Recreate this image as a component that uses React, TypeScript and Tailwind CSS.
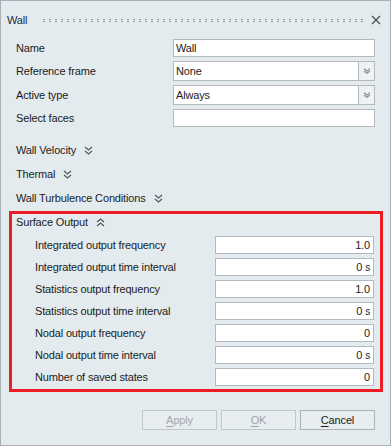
import React from 'react';

const font = { fontFamily: '"Liberation Sans", Arial, sans-serif' };

const outputRows = [
  { label: 'Integrated output frequency', value: '1.0', unit: '' },
  { label: 'Integrated output time interval', value: '0', unit: 's' },
  { label: 'Statistics output frequency', value: '1.0', unit: '' },
  { label: 'Statistics output time interval', value: '0', unit: 's' },
  { label: 'Nodal output frequency', value: '0', unit: '' },
  { label: 'Nodal output time interval', value: '0', unit: 's' },
  { label: 'Number of saved states', value: '0', unit: '' },
];

function DoubleChevron({ up = false }: { up?: boolean }) {
  return (
    <svg width="9" height="9" viewBox="0 0 9 9" className="shrink-0">
      <g
        fill="none"
        stroke="#555b60"
        strokeWidth="1.3"
        transform={up ? 'rotate(180 4.5 4.5)' : undefined}
      >
        <polyline points="1,1 4.5,4 8,1" />
        <polyline points="1,5 4.5,8 8,5" />
      </g>
    </svg>
  );
}

function ComboArrow() {
  return (
    <svg width="8" height="6" viewBox="0 0 8 6">
      <g fill="none" stroke="#8a9095" strokeWidth="1.2">
        <polyline points="1,0.8 4,3 7,0.8" />
        <polyline points="1,3 4,5.2 7,3" />
      </g>
    </svg>
  );
}

function Combo({ value }: { value: string }) {
  return (
    <div className="flex h-[20px]">
      <div className="flex-1 flex items-center bg-white border border-[#b3b9bd] pl-[2px]">
        {value}
      </div>
      <div className="w-[16px] flex items-center justify-center border border-l-0 border-[#b3b9bd] bg-[#eef2f4]">
        <ComboArrow />
      </div>
    </div>
  );
}

function Section({ title }: { title: string }) {
  return (
    <div className="h-[24px] flex items-center gap-[8px]">
      <span>{title}</span>
      <DoubleChevron />
    </div>
  );
}

export default function App() {
  return (
    <div
      style={font}
      className="w-[391px] h-[446px] border border-[#a9b0b5] bg-[#e4ebef] text-[11px] tracking-[-0.15px] text-[#1b1b1b] flex flex-col select-none"
    >
      {/* title bar */}
      <div className="h-[38px] flex items-center pl-[6px] pr-[9px]">
        <span className="text-[#1e2a3c]">Wall</span>
        <svg className="ml-[16px] flex-1 h-[3px]" height="3">
          <defs>
            <pattern id="grip" width="6" height="3" patternUnits="userSpaceOnUse">
              <rect x="0" y="0" width="2" height="1" fill="#8f979c" />
              <rect x="0" y="2" width="2" height="1" fill="#8f979c" />
            </pattern>
          </defs>
          <rect width="100%" height="3" fill="url(#grip)" />
        </svg>
        <svg width="10" height="10" viewBox="0 0 10 10" className="ml-[7px]">
          <g stroke="#4f5458" strokeWidth="1.2">
            <line x1="1" y1="1" x2="9" y2="9" />
            <line x1="9" y1="1" x2="1" y2="9" />
          </g>
        </svg>
      </div>

      {/* main fields */}
      <div className="grid grid-cols-[157px_1fr] gap-y-[4px] pl-[15px] pr-[15px]">
        <div className="flex items-center h-[18px]">Name</div>
        <div className="h-[18px] flex items-center bg-white border border-[#b3b9bd] pl-[2px]">Wall</div>
        <div className="flex items-center">Reference frame</div>
        <Combo value="None" />
        <div className="flex items-center">Active type</div>
        <Combo value="Always" />
        <div className="flex items-center h-[18px]">Select faces</div>
        <div className="h-[18px] bg-white border border-[#b3b9bd]" />
      </div>

      {/* collapsed sections */}
      <div className="mt-[11px] pl-[15px]">
        <Section title="Wall Velocity" />
        <Section title="Thermal" />
        <Section title="Wall Turbulence Conditions" />
      </div>

      {/* surface output */}
      <div className="mt-[1px] ml-[8px] mr-[7px] border-[3px] border-[#ee1c25] pb-[3px]">
        <div className="h-[17px] flex items-center gap-[8px] pl-[4px]">
          <span>Surface Output</span>
          <DoubleChevron up />
        </div>
        <div className="mt-[5px] flex flex-col gap-[4px] pl-[23px] pr-[6px]">
          {outputRows.map((row) => (
            <div key={row.label} className="flex items-center h-[18px]">
              <span className="flex-1">{row.label}</span>
              <div className="w-[159px] h-[18px] bg-white border border-[#b3b9bd] flex items-center justify-end pr-[3px]">
                <span>{row.value}</span>
                {row.unit && <span className="ml-[3px] text-[10px]">{row.unit}</span>}
              </div>
            </div>
          ))}
        </div>
      </div>

      {/* buttons */}
      <div className="mt-[18px] flex justify-end gap-[4px] pr-[15px]">
        <button className="w-[75px] h-[20px] border border-[#c2c7cb] bg-[#e8edf0] text-[#a2a6a9]">
          <u className="underline-offset-2">A</u>pply
        </button>
        <button className="w-[75px] h-[20px] border border-[#c2c7cb] bg-[#e8edf0] text-[#a2a6a9]">
          <u className="underline-offset-2">O</u>K
        </button>
        <button className="w-[75px] h-[20px] border border-[#acb2b7] bg-[#e8edf0] text-[#1b1b1b]">
          <u className="underline-offset-2">C</u>ancel
        </button>
      </div>
    </div>
  );
}
